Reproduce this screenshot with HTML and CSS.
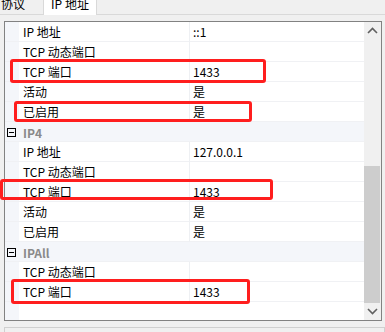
FILE: index.html
```html
<!DOCTYPE html>
<html>
<head>
  <title>TCP/IP 属性</title>
  <link rel="stylesheet" href="styles.css">
</head>
<body>
  <div class="tabs">
    <div class="tab">协议</div>
    <div class="tab active">IP 地址</div>
  </div>
  <div class="panel">
    <div class="grid">
      <div class="row"><span class="name">IP 地址</span><span class="value">::1</span></div>
      <div class="row"><span class="name">TCP 动态端口</span><span class="value"></span></div>
      <div class="row"><span class="name">TCP 端口</span><span class="value">1433</span></div>
      <div class="row"><span class="name">活动</span><span class="value">是</span></div>
      <div class="row"><span class="name">已启用</span><span class="value">是</span></div>
      <div class="row category"><span class="toggle"></span><span class="cat-name">IP4</span></div>
      <div class="row"><span class="name">IP 地址</span><span class="value">127.0.0.1</span></div>
      <div class="row"><span class="name">TCP 动态端口</span><span class="value"></span></div>
      <div class="row"><span class="name">TCP 端口</span><span class="value">1433</span></div>
      <div class="row"><span class="name">活动</span><span class="value">是</span></div>
      <div class="row"><span class="name">已启用</span><span class="value">是</span></div>
      <div class="row category"><span class="toggle"></span><span class="cat-name">IPAll</span></div>
      <div class="row"><span class="name">TCP 动态端口</span><span class="value"></span></div>
      <div class="row"><span class="name">TCP 端口</span><span class="value">1433</span></div>
    </div>
    <div class="scrollbar">
      <div class="arrow">
        <svg width="11" height="7" viewBox="0 0 11 7"><path d="M1 6 L5.5 1.5 L10 6" fill="none" stroke="#606060" stroke-width="1.6"/></svg>
      </div>
      <div class="track"><div class="thumb"></div></div>
      <div class="arrow">
        <svg width="11" height="7" viewBox="0 0 11 7"><path d="M1 1 L5.5 5.5 L10 1" fill="none" stroke="#606060" stroke-width="1.6"/></svg>
      </div>
    </div>
  </div>
  <div class="next-box"></div>

  <div class="mark mark1"></div>
  <div class="mark mark2"></div>
  <div class="mark mark3"></div>
  <div class="mark mark4"></div>
</body>
</html>
```

FILE: styles.css
```css
body {
  margin: 0;
  padding: 0;
  background-color: #f0f0f0;
  font-family: "Noto Sans CJK SC", "Noto Sans", sans-serif;
  font-size: 12px;
  color: #000;
  width: 385px;
  height: 332px;
  overflow: hidden;
  position: relative;
}
.tabs {
  display: flex;
  height: 14px;
  border-bottom: 1px solid #d9d9d9;
  padding-left: 0;
}
.tab {
  height: 14px;
  line-height: 8px;
  padding: 0 0 0 1px;
  width: 42px;
  color: #000;
  overflow: hidden;
}
.tab.active {
  width: 52px;
  height: 15px;
  padding: 0;
  text-align: center;
  background-color: #fff;
  border-left: 1px solid #d9d9d9;
  border-right: 1px solid #d9d9d9;
  margin-bottom: -1px;
}
.panel {
  display: flex;
  margin: 6px 0 0 4px;
  width: 376px;
  height: 298px;
  border: 1px solid #828282;
  background-color: #fff;
}
.grid {
  flex: 1;
  background: linear-gradient(to right, #f4f6fa 14px, #fff 14px);
}
.row {
  display: flex;
  height: 20px;
  align-items: center;
  box-shadow: inset 0 -1px 0 #f0f1f4;
}
.name {
  width: 167px;
  padding-left: 18px;
  height: 20px;
  line-height: 20px;
  box-shadow: inset -1px 0 0 #eef0f3;
}
.value {
  padding-left: 3px;
  height: 20px;
  line-height: 20px;
}
.category {
  background-color: #f4f6fa;
}
.toggle {
  box-sizing: border-box;
  width: 9px;
  height: 9px;
  margin: 0 7px 0 2px;
  border: 1px solid #000;
  position: relative;
}
.toggle::after {
  content: "";
  position: absolute;
  left: 1px;
  right: 1px;
  top: 3px;
  height: 1px;
  background-color: #000;
}
.cat-name {
  font-weight: bold;
  color: #8a8a8a;
}
.scrollbar {
  width: 17px;
  display: flex;
  flex-direction: column;
  background-color: #f0f0f0;
}
.arrow {
  height: 17px;
  display: flex;
  align-items: center;
  justify-content: center;
}
.track {
  flex: 1;
  display: flex;
  flex-direction: column;
  justify-content: flex-end;
}
.thumb {
  margin: 0 1px 0 0;
  height: 137px;
  background-color: #cdcdcd;
}
.next-box {
  margin: 6px 0 0 4px;
  height: 20px;
  border: 1px solid #d0d0d0;
  border-bottom: none;
  background-color: #f0f0f0;
}
.mark {
  position: absolute;
  box-sizing: border-box;
  border: 3px solid #ff1e1e;
  border-radius: 3px;
}
.mark1 { left: 10px; top: 59px; width: 256px; height: 24px; }
.mark2 { left: 14px; top: 101px; width: 238px; height: 21px; }
.mark3 { left: 0; top: 179px; width: 273px; height: 21px; }
.mark4 { left: 11px; top: 279px; width: 239px; height: 25px; }
```
